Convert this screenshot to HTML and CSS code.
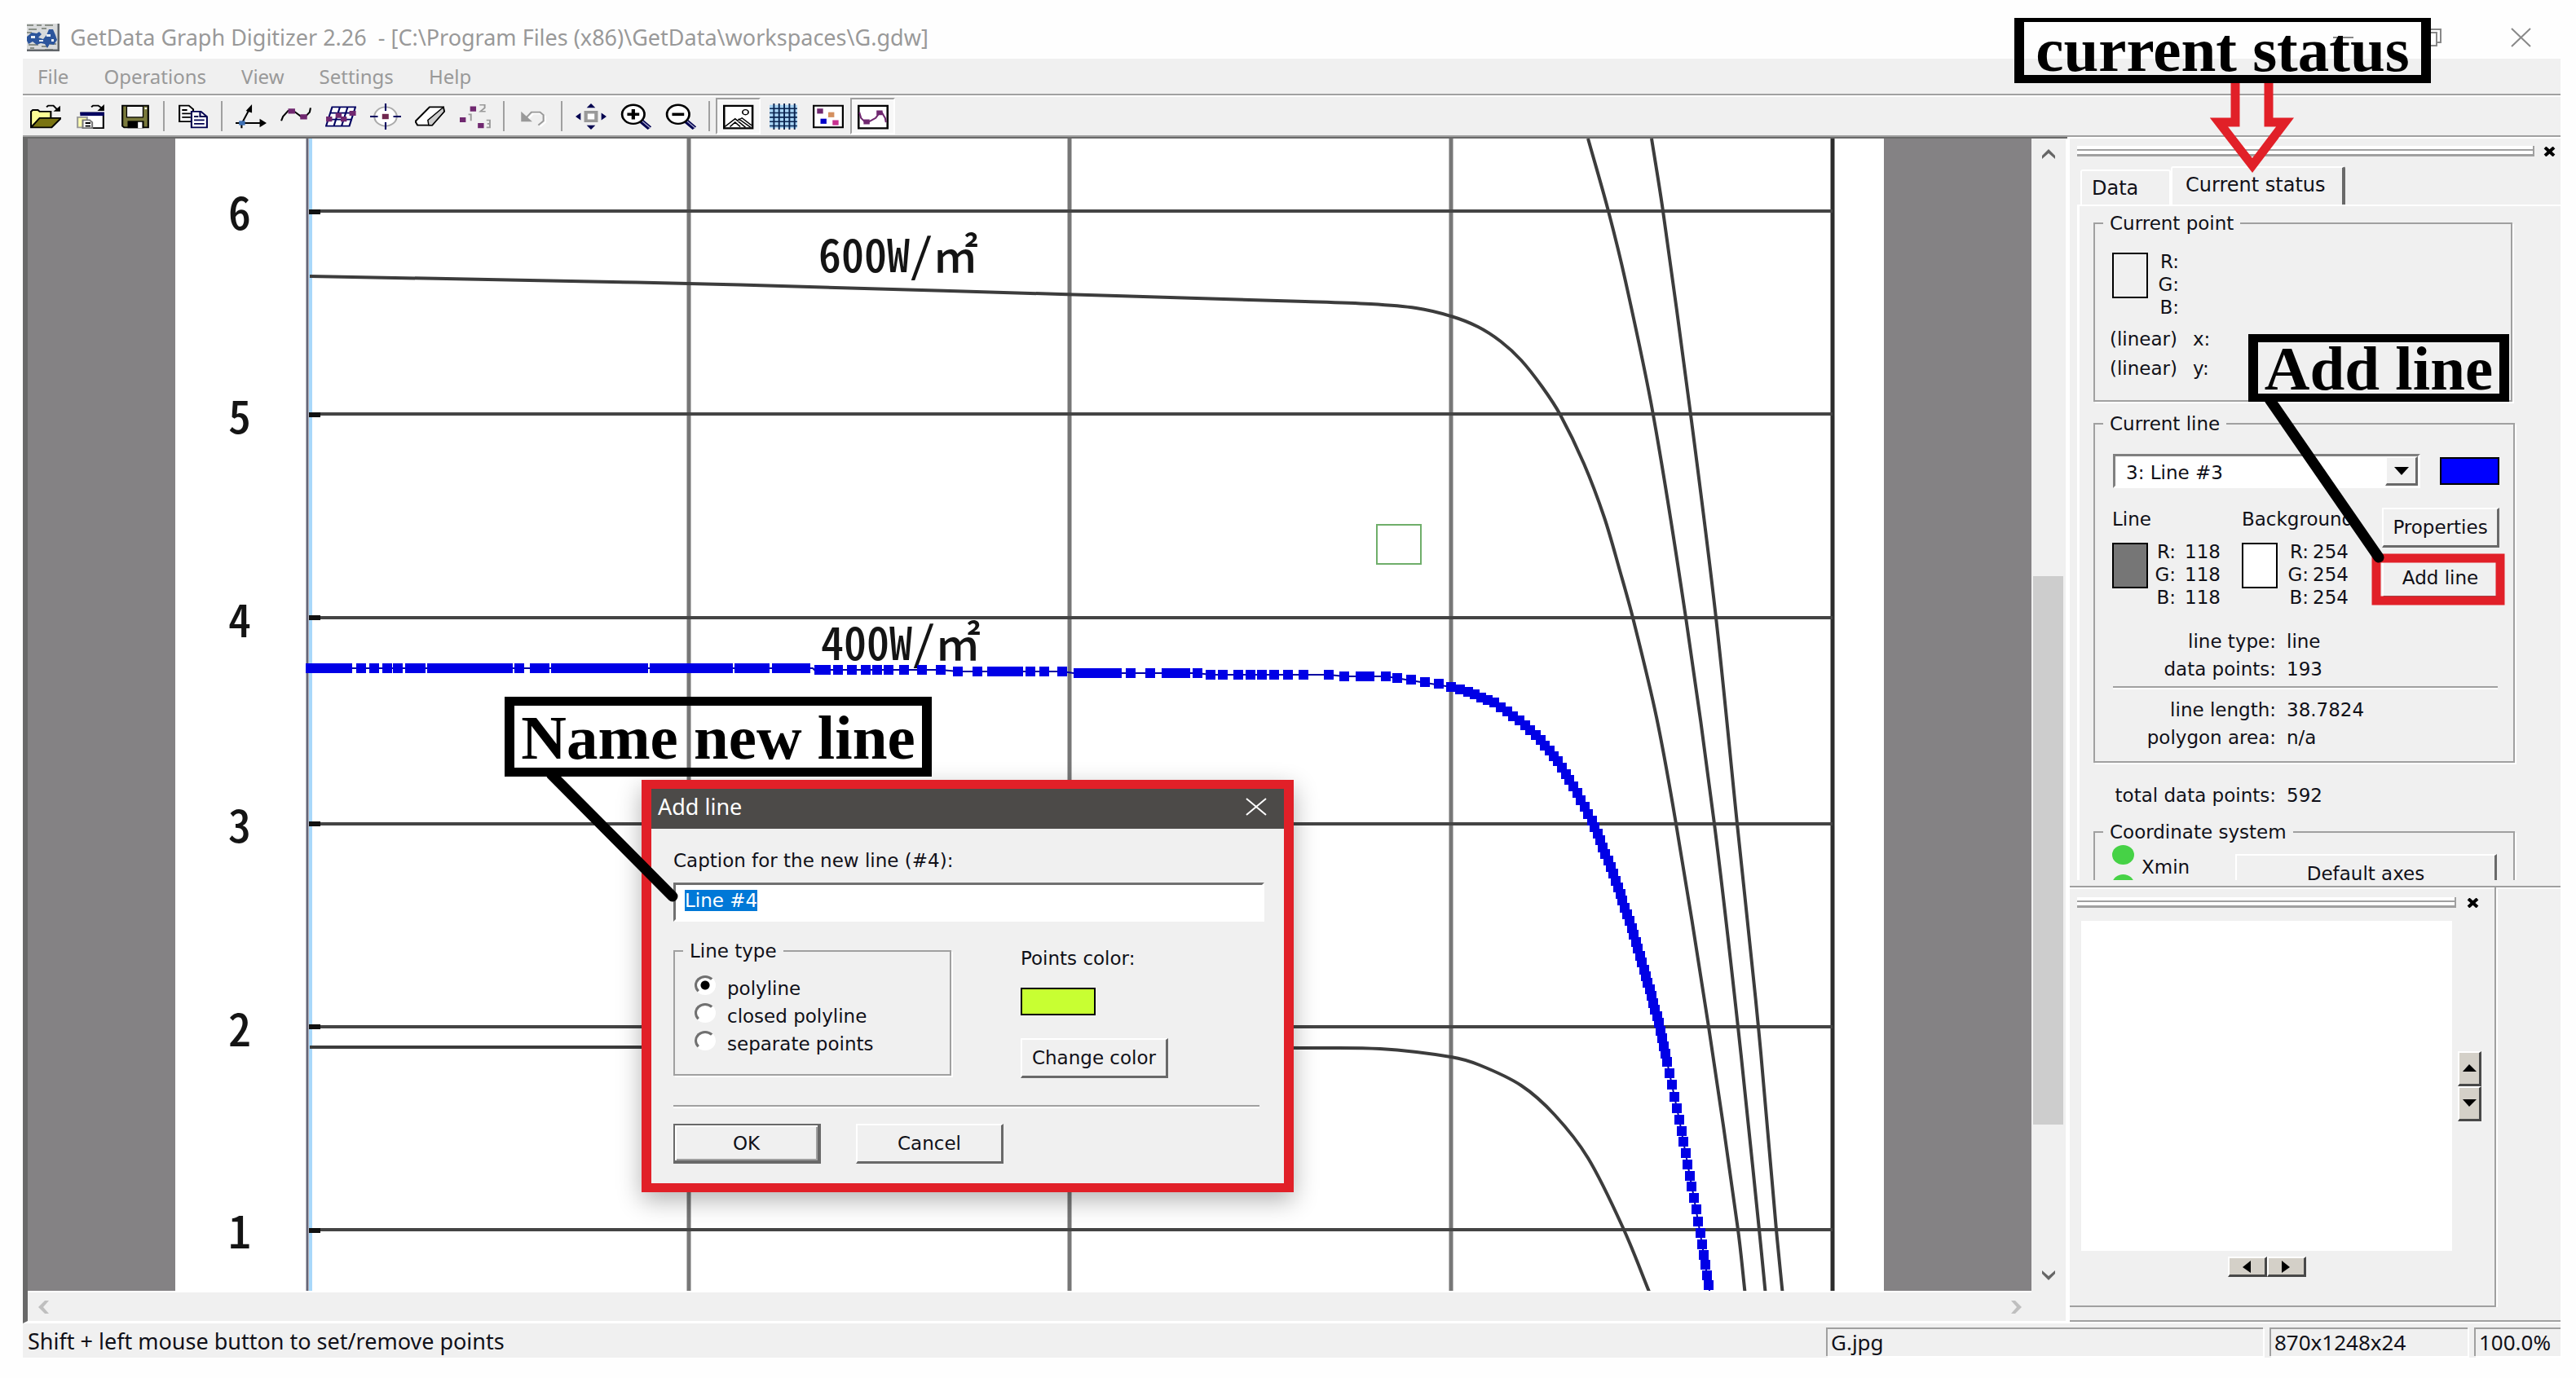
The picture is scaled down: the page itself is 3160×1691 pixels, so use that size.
FILE: index.html
```html
<!DOCTYPE html>
<html lang="en">
<head>
<meta charset="utf-8">
<title>GetData Graph Digitizer</title>
<link rel="stylesheet" href="styles.css">
</head>
<body>
<div class="window">
  <header class="titlebar">
    <svg class="app-icon" viewBox="0 0 40 34" aria-hidden="true">
      <rect width="40" height="34" fill="#d8dadb"/>
      <path d="M0 2h8M12 2h6M22 2h10M2 7h10M18 6h6M0 11h6M2 26h12M18 28h8M28 25h8M4 30h5M22 32h10" stroke="#8a9088" stroke-width="2" fill="none"/>
      <path d="M0 16l6-5 6 1 3-2 3 3-4 4 6 2 4-5 3-7h5l3 7 2 6-4 6-5-1-3 5-3-5-5-1-5 2-5-4-5 3-2-4z" fill="#2c559c"/>
      <path d="M5 15h5v3H5zM15 20h5v2h-5zM24 13h5v3h-5zM30 19h3v3h-3z" fill="#e8eef6"/>
      <path d="M39 0v33H0" fill="none" stroke="#62666a" stroke-width="3"/>
    </svg>
    <h1 class="title">GetData Graph Digitizer 2.26 &nbsp;- [C:\Program Files (x86)\GetData\workspaces\G.gdw]</h1>
    <div class="window-controls">
      <button type="button" aria-label="Minimize"><svg width="25" height="24" viewBox="0 0 25 24"><path d="M0 12h25"/></svg></button>
      <button type="button" aria-label="Restore"><svg width="25" height="24" viewBox="0 0 25 24"><path d="M1 6h17v16H1zM6 6V2h17v16h-5"/></svg></button>
      <button type="button" aria-label="Close"><svg width="25" height="24" viewBox="0 0 25 24"><path d="M1 1l23 22M24 1L1 23"/></svg></button>
    </div>
  </header>

  <nav class="menubar">
    <a href="#file">File</a>
    <a href="#operations">Operations</a>
    <a href="#view">View</a>
    <a href="#settings">Settings</a>
    <a href="#help">Help</a>
  </nav>

  <div class="toolbar" role="toolbar">
    <button type="button" aria-label="Open image"><svg viewBox="0 0 18 18" preserveAspectRatio="none">
      <path d="M.5 16.5V5.5l1-1h3l1 1h6.500v4" fill="#ffff96" stroke="#000"/><path d="M.5 16.500l5-6.500h12.500l-5.500 6.500z" fill="#7a7412" stroke="#000"/><path d="M9.500 2.500l1-1h3l2.500 3" fill="none" stroke="#000"/><path d="M17.500 1.500v4h-4z"/></svg></button>
    <button type="button" aria-label="Open workspace"><svg viewBox="0 0 18 18" preserveAspectRatio="none">
      <path d="M3 6.500h13.500V17H8" fill="#fff" stroke="#000"/><path d="M3 6h14v2.500H3z" fill="#000060"/><path d="M1.500 9.500h5.500v7H1.500z" fill="#ffffb0" stroke="#999"/><path d="M4.500 11.500h4l1.500 1.500v4H4.500z" fill="#fff" stroke="#777"/><path d="M6 13.500h3M6 15.500h3" stroke="#000"/><path d="M9.500 2.500l1-1h3l2.500 2" fill="none" stroke="#000"/><path d="M17 .500v4.500h-4z"/></svg></button>
    <button type="button" aria-label="Save"><svg viewBox="0 0 18 18" preserveAspectRatio="none">
      <path d="M1.500 1.500h15v15h-14l-1-1z" fill="#7a7a3c" stroke="#000"/><path d="M4 2h9.500v7.500H4z" fill="#f6f6f6" stroke="#000" stroke-width=".6"/><path d="M4.500 12h9.500v5H4.500z"/><path d="M10.500 12.800h2.500V17h-2.500z" fill="#fff"/><path d="M14.500 2.800h1.200v1.200h-1.200z" fill="#fff"/></svg></button>
    <span class="sep"></span>
    <button type="button" aria-label="Copy"><svg viewBox="0 0 18 18" preserveAspectRatio="none">
      <path d="M1 1.500h5.500l2.500 2.500v8.500H1z" fill="#fff" stroke="#000"/><path d="M2.500 4.500h3M2.500 7h5M2.500 9.500h5" stroke="#000"/><path d="M8 5.500h5.500l3.500 3.500v7.500H8z" fill="#fff" stroke="#000050"/><path d="M13 5.500v3.500h4M9.500 9h2.500M9.500 11.500h6M9.500 14h6" fill="none" stroke="#000050"/></svg></button>
    <span class="sep"></span>
    <button type="button" aria-label="Set the scale"><svg viewBox="0 0 18 18" preserveAspectRatio="none">
      <path d="M0 13.500h17M3.500 17v-3L8 4" fill="none" stroke="#000"/><path d="M9.500.500v6L6 5zM14 10.500l4 3-4 3z"/><path d="M2 12h3.500v3H2z" fill="#3c6fb4"/></svg></button>
    <button type="button" aria-label="Digitize curve"><svg viewBox="0 0 18 18" preserveAspectRatio="none">
      <path d="M.5 12l1-3 3-4h3l4.500 4h2.500l2.500-3 .5-3" fill="none" stroke="#000"/><path d="M4.500 3.500h4v3.500h-4zM11.500 7.500h4V11h-4z" fill="#702870"/></svg></button>
    <button type="button" aria-label="Digitize area"><svg viewBox="0 0 18 18" preserveAspectRatio="none">
      <path d="M4 2.500h13.500L14 15.500H.500zM8.500 2.500L5 15.500M13 2.500L9.500 15.500M3 6.500h13.500M1.500 11h13.500" fill="#fff" stroke="#000060"/><path d="M14 5h3.800v3.500H14zM6 6.500h3.500V10H6zM.500 9h3.500v3.500H.500zM9 9h3.500v3.500H9z" fill="#702870"/></svg></button>
    <button type="button" aria-label="Point capture"><svg viewBox="0 0 18 18" preserveAspectRatio="none">
      <circle cx="9" cy="9" r="6.500" fill="#fff" stroke="#aaa"/><path d="M9 0v5M9 13v5M0 9h4.500M13.500 9H18" stroke="#000060"/><path d="M7 7.200h3.800v3.600H7z" fill="#702850"/></svg></button>
    <button type="button" aria-label="Eraser"><svg viewBox="0 0 18 18" preserveAspectRatio="none">
      <path d="M8.500 2.500h8l.500 3-7 9.500H1.500L.500 13v-1z" fill="#fff" stroke="#000"/><path d="M7.500 11.500l9-9 .5 3-7 9.500H8z" fill="#ccc" stroke="#000" stroke-width=".7"/></svg></button>
    <button type="button" aria-label="Reorder points"><svg viewBox="0 0 18 18" preserveAspectRatio="none">
      <path d="M6 2h3.500v3.500H6zM0 9.500h3.500V13H0zM10.500 13.500H14V17h-3.500z" fill="#702870"/><path d="M11.500 1h3v2l-2.500 2.500h3M5 7.500h1.500V12M15.500 11.500h2V14h-1.500 1.500v2.500h-2" fill="none" stroke="#999" stroke-width=".9"/></svg></button>
    <span class="sep"></span>
    <button type="button" aria-label="Undo"><svg viewBox="0 0 18 18" preserveAspectRatio="none">
      <path d="M4 11l4-5h5l2 2v4l-3 3" fill="none" stroke="#fff" transform="translate(1 1)"/><path d="M4 11l4-5h5l2 2v4l-3 3" fill="none" stroke="#999"/><path d="M2 5.500V12.500h6.500z" fill="#999"/></svg></button>
    <span class="sep"></span>
    <button type="button" aria-label="Fit"><svg viewBox="0 0 18 18" preserveAspectRatio="none">
      <path d="M6 6h6v6H6z" fill="#fff" stroke="#999" stroke-width="2"/><path d="M9 0l2.500 3h-5zM9 18l2.500-3h-5zM0 9l3-2.500v5zM18 9l-3-2.500v5z" fill="#000050"/></svg></button>
    <button type="button" aria-label="Zoom in"><svg viewBox="0 0 18 18" preserveAspectRatio="none">
      <path d="M12 12l5 5" stroke="#000050" stroke-width="3"/><path d="M12.500 12l5 5" stroke="#aac" stroke-width=".7"/><circle cx="7.500" cy="7.500" r="6.500" fill="#fff" stroke="#000" stroke-width="1.300"/><path d="M4 7.500h7M7.500 4v7" stroke="#000" stroke-width="2"/></svg></button>
    <button type="button" aria-label="Zoom out"><svg viewBox="0 0 18 18" preserveAspectRatio="none">
      <path d="M12 12l5 5" stroke="#000050" stroke-width="3"/><path d="M12.500 12l5 5" stroke="#aac" stroke-width=".7"/><circle cx="7.500" cy="7.500" r="6.500" fill="#fff" stroke="#000" stroke-width="1.300"/><path d="M4 7.500h7" stroke="#000" stroke-width="2"/></svg></button>
    <span class="sep"></span>
    <button type="button" class="pressed" aria-pressed="true" aria-label="Show image"><svg viewBox="0 0 18 18" preserveAspectRatio="none">
      <path d="M.600 1.600h16.500v15.500H.600z" fill="#fff" stroke="#000" stroke-width="1.200"/><circle cx="13" cy="6" r="1.700" fill="none" stroke="#000" stroke-width=".8"/><path d="M1 16l6-5.500 6 6M4 16l3-3 3 3M8 12l3-2 5.500 5M9 10.500l7 6" fill="none" stroke="#000" stroke-width=".8"/></svg></button>
    <button type="button" aria-label="Show grid"><svg viewBox="0 0 18 18" preserveAspectRatio="none">
      <path d="M1 1h16v16H1z" fill="#a8d4f4"/><path d="M3.500 0v18M6.500 0v18M9.500 0v18M12.500 0v18M15.500 0v18M1 3.500h16M1 6.500h16M1 9.500h16M1 12.500h16M1 15.500h16" stroke="#0a2450" stroke-width=".9"/></svg></button>
    <button type="button" aria-label="Show points"><svg viewBox="0 0 18 18" preserveAspectRatio="none">
      <path d="M.500 1.500h17v15H.500z" fill="#fff" stroke="#000" stroke-width="1.100"/><path d="M2.500 3.500H6V7H2.500z" fill="#702870"/><path d="M9 6h3.500v3.500H9z" fill="#d49060"/><path d="M4.500 10.500H8V14H4.500z" fill="#0000c8"/><path d="M11.500 11.500H15V15h-3.500z" fill="#c83090"/></svg></button>
    <button type="button" class="pressed" aria-pressed="true" aria-label="Show lines"><svg viewBox="0 0 18 18" preserveAspectRatio="none">
      <path d="M.600 1.600h16.800v15.500H.600z" fill="#fff" stroke="#000" stroke-width="1.200"/><path d="M1 6l1 4 2.500 3h1.500l4.500-3 2.500-4h1l2 4 .5 3" fill="none" stroke="#702870"/><path d="M3.500 11H7v3.300H3.500zM11 4.800h3.500V8H11z" fill="#702870"/></svg></button>
  </div>

  <main class="workspace">
    <section class="document">
      <div class="viewport">
        <svg class="scan" viewBox="214 170 2096 1414" role="img" aria-label="Current curves by irradiance">
          <rect x="214" y="170" width="2096" height="1414" fill="#fff"/>
          <g class="grid-v">
            <path d="M844 170V1584M1311 170V1584M1779 170V1584"/>
            <path class="frame" d="M2247 170V1584"/>
          </g>
          <path class="grid-h" d="M379 259H2247M379 508H2247M379 758H2247M379 1011H2247M379 1260H2247M379 1509H2247"/>
          <path class="axis-glow" d="M380 170V1584"/>
          <path class="axis" d="M376 170V1584"/>
          <path class="ticks" d="M378 260h14M378 509h14M378 758h14M378 1011h14M378 1260h14M378 1510h14"/>
          <g id="curves" class="curves"></g>
          <g class="axis-labels">
            <text x="279" y="282">6</text>
            <text x="279" y="532">5</text>
            <text x="279" y="782">4</text>
            <text x="279" y="1034">3</text>
            <text x="279" y="1284">2</text>
            <text x="279" y="1532">1</text>
            <text x="1003" y="334">600W/㎡</text>
            <text x="1006" y="810">400W/㎡</text>
          </g>
          <g id="series" class="series"></g>
          <rect class="cursor" x="1688" y="644" width="54" height="48"/>
        </svg>
      </div>
      <div class="vscroll">
        <button type="button" aria-label="Scroll up"><svg width="18" height="14" viewBox="0 0 18 14"><path d="M1 13V9l8-8 8 8v4L9 6z"/></svg></button>
        <div class="thumb"></div>
        <button type="button" aria-label="Scroll down"><svg width="18" height="14" viewBox="0 0 18 14"><path d="M1 1v4l8 8 8-8V1L9 8z"/></svg></button>
      </div>
      <div class="hscroll">
        <button type="button" aria-label="Scroll left"><svg width="15" height="16" viewBox="0 0 15 16"><path d="M14 0H9L1 8l8 8h5L7 8z"/></svg></button>
        <button type="button" aria-label="Scroll right"><svg width="15" height="16" viewBox="0 0 15 16"><path d="M1 0h5l8 8-8 8H1l7-8z"/></svg></button>
      </div>
    </section>

    <aside class="side">
      <div class="dock-head">
        <span class="gripper"></span>
        <button type="button" aria-label="Close panel"><svg width="16" height="12" viewBox="0 0 16 12"><path d="M2 1l11 10M13 1L2 11"/></svg></button>
      </div>
      <div class="tabs" role="tablist">
        <button type="button" role="tab" class="tab">Data</button>
        <button type="button" role="tab" class="tab active" aria-selected="true">Current status</button>
      </div>
      <div class="tabpanel" role="tabpanel">
        <fieldset class="group point">
          <legend>Current point</legend>
          <div class="rgb">
            <span class="swatch"></span>
            <span class="rgb-keys">R:<br>G:<br>B:</span>
          </div>
          <div class="coords"><span>(linear)</span><span>x:</span><span>(linear)</span><span>y:</span></div>
        </fieldset>
        <fieldset class="group line">
          <legend>Current line</legend>
          <div class="pick">
            <div class="combo">
              <select aria-label="Current line"><option>3: Line #3</option></select>
              <span class="combo-arrow"><svg width="18" height="10" viewBox="0 0 18 10"><path d="M0 0h18L9 10z"/></svg></span>
            </div>
            <span class="swatch blue"></span>
          </div>
          <div class="colors">
            <div class="color">
              <span>Line</span>
              <div class="rgb"><span class="swatch gray"></span><span class="rgb-keys">R:<br>G:<br>B:</span><span class="rgb-vals">118<br>118<br>118</span></div>
            </div>
            <div class="color narrow">
              <span>Background</span>
              <div class="rgb"><span class="swatch white"></span><span class="rgb-keys">R:<br>G:<br>B:</span><span class="rgb-vals">254<br>254<br>254</span></div>
            </div>
            <div class="actions">
              <button type="button" class="btn">Properties</button>
              <button type="button" class="btn">Add line</button>
            </div>
          </div>
          <dl class="facts"><dt>line type:</dt><dd>line</dd><dt>data points:</dt><dd>193</dd></dl>
          <hr class="rule">
          <dl class="facts"><dt>line length:</dt><dd>38.7824</dd><dt>polygon area:</dt><dd>n/a</dd></dl>
        </fieldset>
        <dl class="facts total"><dt>total data points:</dt><dd>592</dd></dl>
        <fieldset class="group system">
          <legend>Coordinate system</legend>
          <div class="axes">
            <span class="leds"><i></i><i></i></span>
            <span class="axis-name">Xmin</span>
            <button type="button" class="btn">Default axes</button>
          </div>
        </fieldset>
      </div>
      <section class="magnifier">
        <div class="dock-head">
          <span class="gripper"></span>
          <button type="button" aria-label="Close magnifier"><svg width="16" height="12" viewBox="0 0 16 12"><path d="M2 1l11 10M13 1L2 11"/></svg></button>
        </div>
        <div class="preview-grid">
          <div class="preview"></div>
          <div class="spin vertical">
            <button type="button" aria-label="Up"><svg width="17" height="9" viewBox="0 0 17 9"><path d="M8 0l9 9H0z"/></svg></button>
            <button type="button" aria-label="Down"><svg width="17" height="9" viewBox="0 0 17 9"><path d="M0 0h17L8 9z"/></svg></button>
          </div>
          <div class="spin">
            <button type="button" aria-label="Left"><svg width="10" height="15" viewBox="0 0 10 15"><path d="M10 0v15L0 8z"/></svg></button>
            <button type="button" aria-label="Right"><svg width="10" height="15" viewBox="0 0 10 15"><path d="M0 0l10 8-10 7z"/></svg></button>
          </div>
        </div>
      </section>
    </aside>
  </main>

  <footer class="statusbar">
    <span class="hint">Shift + left mouse button to set/remove points</span>
    <span class="cell">G.jpg</span>
    <span class="cell">870x1248x24</span>
    <span class="cell">100.0%</span>
  </footer>
</div>

<form class="dialog" role="dialog" aria-label="Add line">
  <div class="dialog-title">
    <span>Add line</span>
    <button type="button" aria-label="Close"><svg width="26" height="22" viewBox="0 0 26 22"><path d="M1 1l24 20M25 1L1 21"/></svg></button>
  </div>
  <div class="dialog-body">
    <label for="caption">Caption for the new line (#4):</label>
    <input type="text" id="caption" value="Line #4" autofocus>
    <div class="dialog-row">
      <fieldset class="group types">
        <legend>Line type</legend>
        <label><input type="radio" name="type" checked>polyline</label>
        <label><input type="radio" name="type">closed polyline</label>
        <label><input type="radio" name="type">separate points</label>
      </fieldset>
      <div class="point-color">
        <span>Points color:</span>
        <span class="swatch lime"></span>
        <button type="button" class="btn">Change color</button>
      </div>
    </div>
    <hr class="rule">
    <div class="dialog-actions">
      <button type="submit" class="btn default">OK</button>
      <button type="button" class="btn">Cancel</button>
    </div>
  </div>
</form>

<div class="notes">
  <svg class="note-lines" aria-hidden="true">
    <path class="red" d="M2742 100V150H2722L2763 203L2803 150H2783V100"/>
    <rect class="red" x="2915" y="685" width="152" height="52"/>
    <path class="black" d="M2784 490L2918 684M676 950L825 1100"/>
  </svg>
  <p class="note status">current status</p>
  <p class="note add">Add line</p>
  <p class="note name">Name new line</p>
</div>
<script src="chart.js"></script>
</body>
</html>
```
FILE: styles.css
```css
* { box-sizing: border-box; }

body {
  margin: 0;
  height: 100vh;
  padding: 0 19px 25px 28px;
  display: flex;
  position: relative;
  background: #fefefe;
  color: #101018;
  font: 23px/28px "DejaVu Sans", Verdana, sans-serif;
}

button, input, select { font: inherit; color: inherit; }
button { padding: 0; border: 0; background: none; }
h1, p, dl, dd { margin: 0; }
svg { display: block; }

.window { flex: 1; min-width: 0; display: flex; flex-direction: column; background: #f0f0f0; }

/* Title bar and menu */
.titlebar { display: flex; align-items: center; height: 72px; flex: none; padding: 20px 0 0 5px; background: #fefefe; }
.app-icon { width: 40px; height: 34px; }
.title { flex: 1; padding-left: 13px; font: 27px/32px "Noto Sans", sans-serif; color: #999; white-space: nowrap; }
.window-controls { display: flex; gap: 11px; }
.window-controls button { width: 98px; height: 48px; display: grid; place-items: center; }
.window-controls path { fill: none; stroke: #888; stroke-width: 2; }

.menubar { display: flex; align-items: center; gap: 43px; height: 45px; flex: none; padding-left: 18px; border-bottom: 2px solid #a0a0a0; font: 24px/32px "Noto Sans", sans-serif; }
.menubar a { color: #999; text-decoration: none; }

.toolbar { display: flex; align-items: center; height: 51px; flex: none; border-top: 2px solid #fff; border-bottom: 2px solid #a0a0a0; }
.toolbar button { width: 55px; height: 45px; display: grid; place-items: center; }
.toolbar svg { width: 38px; height: 32px; }
.toolbar .pressed { border: 2px solid #fff; border-top-color: #a0a0a0; border-left-color: #a0a0a0; background: #f8f8f8; }
.sep { width: 16px; height: 37px; background: linear-gradient(#a0a0a0, #a0a0a0) center / 2px 100% no-repeat; }

/* Document view */
.workspace { flex: 1; display: flex; min-height: 0; }
.document { flex: 1; min-width: 0; display: grid; grid-template: minmax(0, 1fr) 37px / 1fr 44px; border-top: 2px solid #696969; border-left: 6px solid #696969; border-bottom: 3px solid #fff; }
.viewport { background: #848284; overflow: hidden; display: flex; justify-content: center; min-width: 0; }
.scan { width: 2096px; height: 1414px; flex: none; }
.grid-v path { stroke: #777; stroke-width: 5; }
.grid-v .frame { stroke: #2c2c2c; }
.grid-h { stroke: #444; stroke-width: 4; }
.axis { stroke: #667; stroke-width: 3; }
.axis-glow { stroke: #a8d8fa; stroke-width: 4; }
.ticks { stroke: #111; stroke-width: 6; }
.curves path { fill: none; stroke: #3c3c3c; stroke-width: 4; }
.axis-labels { font: 500 56px "Noto Sans CJK JP", sans-serif; font-feature-settings: "hwid"; fill: #141414; }
.series rect { fill: #0000e6; }
.series polyline { fill: none; stroke: #0000a0; stroke-width: 2; }
.cursor { fill: none; stroke: #6fae6a; stroke-width: 2; }

.vscroll { grid-row: 1 / 3; grid-column: 2; display: flex; flex-direction: column; align-items: flex-start; padding: 0 0 37px 2px; border-right: 2px solid #fff; }
.vscroll button { width: 38px; height: 38px; display: grid; place-items: center; flex: none; }
.vscroll .thumb { width: 37px; margin-top: auto; height: 673px; margin-bottom: 166px; background: #cdcdcd; }
.vscroll path { fill: #666; }
.hscroll { display: flex; justify-content: space-between; border-top: 2px solid #fff; }
.hscroll button { width: 38px; display: grid; place-items: center; }
.hscroll path { fill: #bfbfbf; }

/* Side panel */
.side { width: 605px; flex: none; display: flex; flex-direction: column; min-height: 0; border-left: 3px solid #fff; border-top: 2px solid #fff; border-bottom: 2px solid #fff; box-shadow: inset 0 -2px #a0a0a0; }
.dock-head { display: flex; align-items: center; gap: 10px; padding: 9px 4px 0 9px; }
.dock-head button { width: 18px; height: 13px; display: grid; place-items: center; }
.dock-head path { stroke: #000; stroke-width: 4; }
.gripper { flex: 1; height: 13px; border-right: 2px solid #a0a0a0; background: linear-gradient(#fff 0 4px, #a0a0a0 4px 6px, #fff 6px 10px, #a0a0a0 10px 13px); }
.tabs { display: flex; align-items: flex-end; padding: 12px 0 0 13px; font-size: 24px; }
.tab { height: 43px; width: 111px; padding-left: 12px; text-align: left; border: 2px solid #fff; border-bottom: 0; border-radius: 3px 3px 0 0; }
.tab.active { width: 214px; height: 47px; padding: 0 0 4px 16px; border-right: 4px solid #696969; }
.tabpanel { flex: 1; min-height: 0; overflow: hidden; margin-left: 9px; padding: 7px 0 0 17px; border-top: 2px solid #fff; border-left: 3px solid #fff; margin-bottom: 7px; }

.group { margin: 0; padding: 0; min-width: 0; border: 2px solid #a0a0a0; box-shadow: 2px 2px #fff; }
.group legend { margin-left: 10px; padding: 0 8px; height: 28px; }
.swatch { display: block; width: 44px; height: 56px; border: 2px solid #000; }
.swatch.gray { background: #767676; }
.swatch.white { background: #fff; }
.swatch.blue { width: 73px; height: 34px; background: #00f; }
.swatch.lime { width: 92px; height: 34px; background: #c8ff32; }
.rgb { display: flex; }
.rgb .swatch { margin-top: 3px; }
.rgb-keys { width: 38px; text-align: right; }
.color .rgb-keys { width: 34px; }
.rgb-vals { margin-left: 11px; }

.point { width: 514px; height: 233px; }
.point .rgb { padding: 19px 0 0 21px; }
.coords { display: grid; grid-template-columns: 102px 1fr; line-height: 36px; padding: 7px 0 0 18px; }

.line { width: 517px; height: 430px; margin-top: 13px; }
.pick { display: flex; align-items: center; gap: 24px; padding: 23px 0 0 22px; }
.combo { position: relative; width: 377px; height: 42px; border: 3px solid #fff; border-top-color: #808080; border-left-color: #808080; background: #fff; }
.combo select { appearance: none; width: 100%; height: 100%; border: 0; background: none; padding: 3px 0 0 13px; outline: 0; }
.combo-arrow { position: absolute; top: 0; right: 0; width: 40px; height: 36px; display: grid; place-items: center; background: #f0f0f0; border: 2px solid #fff; border-right: 3px solid #696969; border-bottom: 3px solid #696969; pointer-events: none; }
.colors { display: flex; padding: 24px 0 0 21px; }
.color { width: 159px; }
.color > span { display: block; margin-bottom: 12px; line-height: 28px; }
.color.narrow { width: 172px; }
.color.narrow .rgb-keys { width: 38px; }
.color.narrow .rgb-vals { margin-left: 5px; }
.actions { display: flex; flex-direction: column; gap: 13px; width: 144px; }
.btn { display: grid; place-items: center; height: 49px; background: #f0f0f0; border: 2px solid #fff; border-right: 3px solid #696969; border-bottom: 3px solid #696969; white-space: nowrap; }
.facts { display: grid; grid-template-columns: 200px 1fr; column-gap: 13px; line-height: 34px; padding-left: 22px; }
.facts dt { text-align: right; white-space: nowrap; }
.colors + .facts { padding-top: 23px; }
.rule { height: 4px; margin: 4px 19px 8px 22px; border: 0; border-top: 2px solid #a0a0a0; border-bottom: 2px solid #fff; }
.total { margin-top: 23px; padding-left: 0; grid-template-columns: 224px 1fr; }
.system { width: 517px; margin-top: 14px; }
.axes { display: flex; padding: 2px 20px 0 21px; }
.leds { display: grid; gap: 11px; }
.leds i { width: 27px; height: 24px; border-radius: 50%; background: #46d246; }
.axis-name { margin: 13px 0 0 9px; width: 115px; }
.axes .btn { flex: 1; margin-top: 11px; }

.magnifier { display: grid; grid-template: auto 1fr / 523px; height: 535px; flex: none; padding-bottom: 18px; border-top: 2px solid #a0a0a0; box-shadow: inset 0 2px #fff; }
.magnifier .dock-head { padding: 12px 17px 0 9px; }
.magnifier .dock-head button { margin-left: 2px; }
.magnifier .dock-head, .preview-grid { border-right: 2px solid #a0a0a0; box-shadow: 2px 0 #fff; }
.preview-grid { display: grid; grid-template: 405px 25px / 455px 29px; gap: 7px; padding: 16px 0 0 14px; border-bottom: 2px solid #a0a0a0; }
.preview { background: #fff; }
.spin { display: flex; place-self: center; }
.spin.vertical { flex-direction: column; }
.spin button { width: 48px; height: 25px; display: grid; place-items: center; background: #d4d0c8; border: 2px solid #fff; border-right: 3px solid #484848; border-bottom: 3px solid #484848; }
.spin.vertical button { width: 29px; height: 43px; }

/* Status bar */
.statusbar { display: grid; grid-template-columns: 1fr 536px 243px 106px; gap: 8px; height: 42px; flex: none; padding: 5px 0 2px; font: 26px/34px "Noto Sans", sans-serif; }
.hint { padding-left: 6px; font-size: 27px; }
.cell { padding-left: 4px; border-top: 2px solid #a0a0a0; border-left: 2px solid #a0a0a0; box-shadow: 2px 2px #fff; line-height: 32px; }

/* Add line dialog */
.dialog { position: absolute; left: 787px; top: 957px; width: 800px; background: #f0f0f0; border: solid #e12028; border-width: 11px 12px; box-shadow: 0 10px 28px rgba(0, 0, 0, .3); }
.dialog-title { display: flex; align-items: center; justify-content: space-between; height: 49px; padding: 0 21px 6px 8px; background: #4c4a48; color: #fff; font: 27px/32px "Noto Sans", sans-serif; }
.dialog-title path { stroke: #fff; stroke-width: 2; }
.dialog-body { padding: 25px 24px 24px 27px; }
.dialog-body > label { display: block; }
#caption { display: block; width: 100%; height: 48px; margin-top: 13px; padding: 0 0 5px 11px; border: 3px solid #fff; border-top-color: #707070; border-left-color: #707070; background: #fff; outline: 0; }
#caption::selection { background: #0078d7; color: #fff; }
.dialog-row { display: flex; gap: 85px; margin-top: 22px; }
.types { width: 341px; height: 167px; }
.types label { display: flex; align-items: center; gap: 14px; height: 34px; padding-left: 24px; }
.types legend + label { margin-top: 15px; }
.types input { appearance: none; width: 26px; height: 24px; margin: 0 0 8px; border-radius: 50%; border: 3px solid #fff; border-top-color: #707070; border-left-color: #707070; background: #fff; }
.types input:checked { background: radial-gradient(circle, #000 0 5px, #fff 6px); }
.point-color { display: flex; flex-direction: column; align-items: flex-start; padding-top: 9px; }
.point-color .swatch { margin: 22px 0 28px; }
.point-color .btn, .dialog-actions .btn { width: 181px; }
.dialog-body > .rule { margin: 33px 6px 19px 0; }
.dialog-actions { display: flex; gap: 43px; }
.btn.default { border: 2px solid #696969; border-right-width: 4px; border-bottom-width: 4px; box-shadow: inset 2px 2px #fff, inset -2px -2px #a0a0a0; }

/* Callouts drawn over the window */
.notes { position: absolute; inset: 0; pointer-events: none; }
.note-lines { position: absolute; inset: 0; width: 100%; height: 100%; overflow: hidden; }
.note-lines path, .note-lines rect { fill: none; }
.red { stroke: #e12028; stroke-width: 11; }
.black { stroke: #000; stroke-width: 13; stroke-linecap: round; }
.note { position: absolute; border: 12px solid #000; color: #000; text-align: center; white-space: nowrap; font: bold 77px/64px "Liberation Serif", serif; }
.note.status { left: 2471px; top: 22px; width: 511px; height: 80px; border-top-width: 5px; border-bottom-width: 10px; line-height: 68px; }
.note.add { left: 2758px; top: 410px; width: 320px; height: 83px; border-top-width: 10px; border-bottom-width: 10px; }
.note.name { left: 619px; top: 855px; width: 524px; height: 98px; border-width: 11px 12px; line-height: 78px; }
```
FILE: chart.js
```js
const ns = 'http://www.w3.org/2000/svg';

function add(parent, name, attrs) {
  const node = document.createElementNS(ns, name);
  for (const key in attrs) node.setAttribute(key, attrs[key]);
  parent.appendChild(node);
}

// Printed curves of the scanned chart, as points joined by a smooth spline.
const printed = [
  [[379, 339], [844, 348], [1300, 361], [1600, 370], [1680, 373], [1736, 378], [1779, 388], [1812, 401], [1840, 419],
   [1865, 442], [1891, 475], [1913, 509], [1942, 569], [1967, 635], [1986, 700], [2002, 758], [2031, 880],
   [2055, 1011], [2095, 1260], [2131, 1509], [2140, 1590]],
  [[1947, 170], [1972, 259], [1993, 345], [2027, 509], [2067, 758], [2102, 1011], [2131, 1260], [2157, 1509], [2165, 1590]],
  [[2025, 170], [2039, 259], [2073, 509], [2104, 758], [2130, 1011], [2156, 1260], [2178, 1509], [2186, 1590]],
  [[379, 1285], [844, 1285], [1300, 1285], [1600, 1286], [1692, 1287], [1779, 1297], [1814, 1307], [1865, 1332],
   [1906, 1368], [1947, 1421], [1991, 1509], [2024, 1590]]
];

function spline(p) {
  let d = 'M' + p[0];
  for (let i = 0; i < p.length - 1; i++) {
    const a = p[i], b = p[i + 1];
    const before = p[i - 1] || a, after = p[i + 2] || b;
    const span = Math.hypot(b[0] - a[0], b[1] - a[1]);
    const ta = span / (3 * Math.hypot(b[0] - before[0], b[1] - before[1]));
    const tb = span / (3 * Math.hypot(after[0] - a[0], after[1] - a[1]));
    d += 'C' + [a[0] + (b[0] - before[0]) * ta, a[1] + (b[1] - before[1]) * ta,
      b[0] - (after[0] - a[0]) * tb, b[1] - (after[1] - a[1]) * tb, b[0], b[1]];
  }
  return d;
}

const curves = document.getElementById('curves');
printed.forEach(points => add(curves, 'path', { d: spline(points) }));

// Digitized points of line #3: single markers and dense runs [from, to, y].
const size = 12;
const runs = [
  [374, 431, 820], [496, 521, 820], [523, 628, 820], [649, 673, 820], [675, 794, 820],
  [796, 898, 820], [900, 943, 820], [946, 993, 820], [998, 1018, 822], [1210, 1254, 824],
  [1316, 1375, 826], [1424, 1459, 826], [1662, 1685, 830]
];
const singles = [
  [442, 820], [458, 820], [474, 820], [487, 820], [636, 820],
  [1027, 822], [1044, 822], [1061, 822], [1075, 822], [1089, 822], [1108, 822], [1130, 822], [1153, 822],
  [1174, 824], [1198, 824], [1263, 824], [1280, 824], [1302, 824],
  [1386, 826], [1410, 826], [1468, 826], [1484, 828], [1499, 828], [1518, 828], [1533, 828],
  [1547, 828], [1562, 828], [1579, 828], [1598, 828], [1629, 828], [1648, 830],
  [1699, 830], [1713, 832], [1730, 834], [1747, 837], [1764, 839]
];
const bend = [
  [1779, 843], [1800, 849], [1832, 862], [1863, 884], [1889, 908], [1910, 934], [1929, 965],
  [1952, 1007], [1975, 1064], [1998, 1130], [2018, 1198], [2034, 1255], [2044, 1303],
  [2059, 1374], [2077, 1470], [2087, 1527], [2097, 1590]
];
const series = document.getElementById('series');

function marker(x, y) {
  add(series, 'rect', { x: Math.round(x - size / 2), y: Math.round(y - size / 2), width: size, height: size });
}

const trace = [[374, 820], [996, 820], [998, 822], [1153, 822], [1174, 824], [1302, 824], [1316, 826],
  [1468, 826], [1484, 828], [1629, 828], [1648, 830], [1699, 830]].concat(bend);
add(series, 'polyline', { points: trace.join(' ') });
runs.forEach(([from, to, y]) => add(series, 'rect', { x: from, y: y - size / 2, width: to - from, height: size }));
singles.forEach(([x, y]) => marker(x, y));
for (let i = 1; i < bend.length; i++) {
  const [x0, y0] = bend[i - 1];
  const [x1, y1] = bend[i];
  const gap = y0 > 1260 ? 14 : 9;
  const steps = Math.max(1, Math.round(Math.hypot(x1 - x0, y1 - y0) / gap));
  for (let s = 0; s < steps; s++) marker(x0 + (x1 - x0) * s / steps, y0 + (y1 - y0) * s / steps);
}

document.getElementById('caption').select();
```
